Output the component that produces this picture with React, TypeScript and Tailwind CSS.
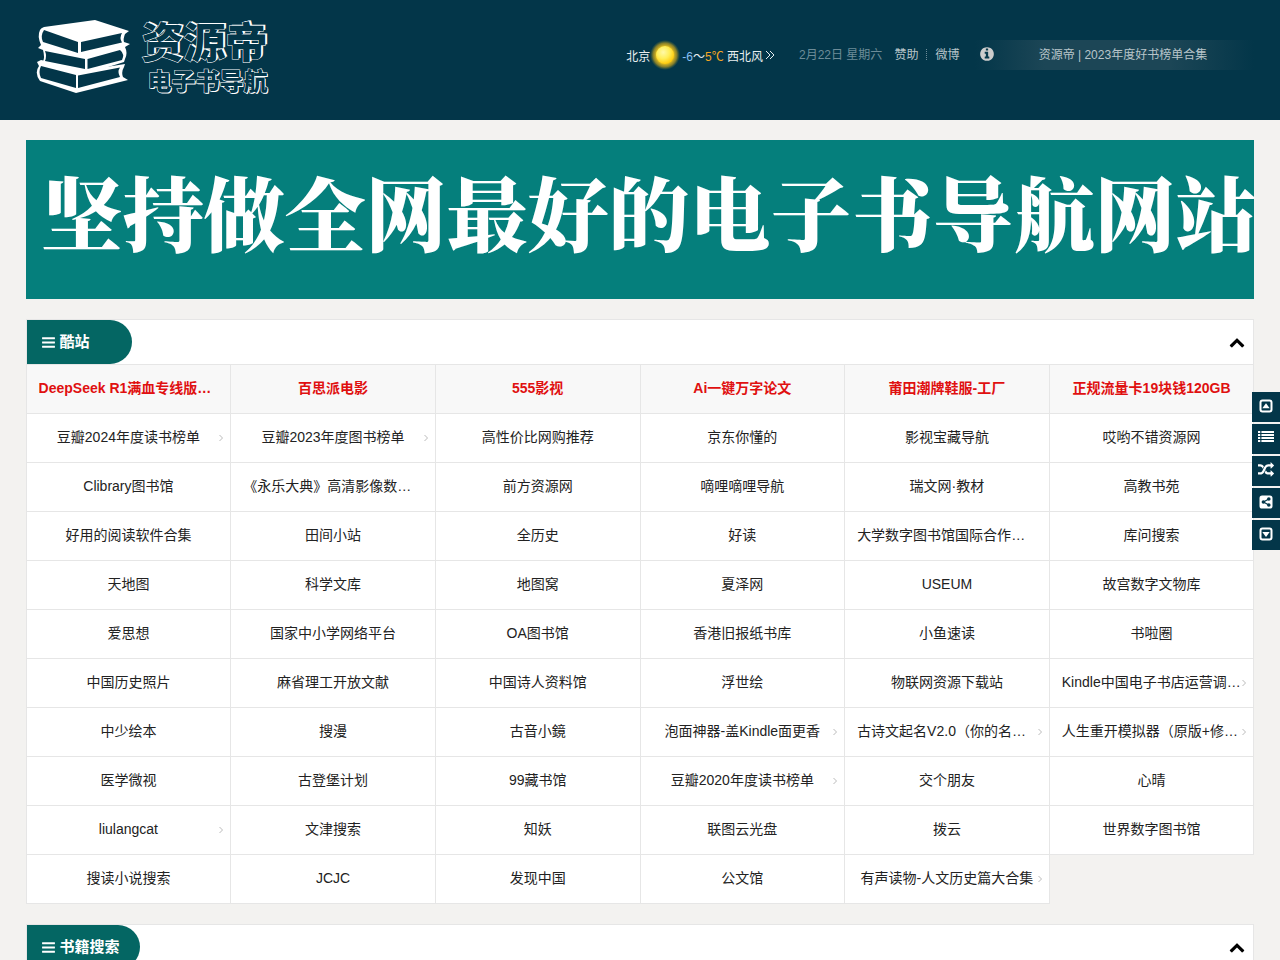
import { useState } from "react";
import type { ReactNode } from "react";

type Site = { name: string; arrow?: boolean; hot?: boolean };

const SITES: Site[] = [
  { name: "DeepSeek R1满血专线版本入口", hot: true },
  { name: "百思派电影", hot: true },
  { name: "555影视", hot: true },
  { name: "Ai一键万字论文", hot: true },
  { name: "莆田潮牌鞋服-工厂", hot: true },
  { name: "正规流量卡19块钱120GB", hot: true },
  { name: "豆瓣2024年度读书榜单", arrow: true },
  { name: "豆瓣2023年度图书榜单", arrow: true },
  { name: "高性价比网购推荐" },
  { name: "京东你懂的" },
  { name: "影视宝藏导航" },
  { name: "哎哟不错资源网" },
  { name: "Clibrary图书馆" },
  { name: "《永乐大典》高清影像数据库" },
  { name: "前方资源网" },
  { name: "嘀哩嘀哩导航" },
  { name: "瑞文网·教材" },
  { name: "高教书苑" },
  { name: "好用的阅读软件合集" },
  { name: "田间小站" },
  { name: "全历史" },
  { name: "好读" },
  { name: "大学数字图书馆国际合作计划" },
  { name: "库问搜索" },
  { name: "天地图" },
  { name: "科学文库" },
  { name: "地图窝" },
  { name: "夏泽网" },
  { name: "USEUM" },
  { name: "故宫数字文物库" },
  { name: "爱思想" },
  { name: "国家中小学网络平台" },
  { name: "OA图书馆" },
  { name: "香港旧报纸书库" },
  { name: "小鱼速读" },
  { name: "书啦圈" },
  { name: "中国历史照片" },
  { name: "麻省理工开放文献" },
  { name: "中国诗人资料馆" },
  { name: "浮世绘" },
  { name: "物联网资源下载站" },
  { name: "Kindle中国电子书店运营调整通知", arrow: true },
  { name: "中少绘本" },
  { name: "搜漫" },
  { name: "古音小鏡" },
  { name: "泡面神器-盖Kindle面更香", arrow: true },
  { name: "古诗文起名V2.0（你的名字）", arrow: true },
  { name: "人生重开模拟器（原版+修改版）", arrow: true },
  { name: "医学微视" },
  { name: "古登堡计划" },
  { name: "99藏书馆" },
  { name: "豆瓣2020年度读书榜单", arrow: true },
  { name: "交个朋友" },
  { name: "心晴" },
  { name: "liulangcat", arrow: true },
  { name: "文津搜索" },
  { name: "知妖" },
  { name: "联图云光盘" },
  { name: "拨云" },
  { name: "世界数字图书馆" },
  { name: "搜读小说搜索" },
  { name: "JCJC" },
  { name: "发现中国" },
  { name: "公文馆" },
  { name: "有声读物-人文历史篇大合集", arrow: true },
];

const PATHS = {
  bars: "M1664 1344v128q0 26-19 45t-45 19h-1408q-26 0-45-19t-19-45v-128q0-26 19-45t45-19h1408q26 0 45 19t19 45zm0-512v128q0 26-19 45t-45 19h-1408q-26 0-45-19t-19-45v-128q0-26 19-45t45-19h1408q26 0 45 19t19 45zm0-512v128q0 26-19 45t-45 19h-1408q-26 0-45-19t-19-45v-128q0-26 19-45t45-19h1408q26 0 45 19t19 45z",
  info: "M1152 1376v-160q0-14-9-23t-23-9h-96v-512q0-14-9-23t-23-9h-320q-14 0-23 9t-9 23v160q0 14 9 23t23 9h96v320h-96q-14 0-23 9t-9 23v160q0 14 9 23t23 9h448q14 0 23-9t9-23zm-128-896v-160q0-14-9-23t-23-9h-192q-14 0-23 9t-9 23v160q0 14 9 23t23 9h192q14 0 23-9t9-23zm640 416q0 209-103 385.5t-279.5 279.5-385.5 103-385.5-103-279.5-279.5-103-385.5 103-385.5 279.5-279.5 385.5-103 385.5 103 279.5 279.5 103 385.5z",
  up: "M1683 1331l-166 165q-19 19-45 19t-45-19l-531-531-531 531q-19 19-45 19t-45-19l-166-165q-19-19-19-45.5t19-45.5l742-741q19-19 45-19t45 19l742 741q19 19 19 45.5t-19 45.5z",
  random:
    "M666 481q-60 92-137 273-22-45-37-72.5t-40.5-63.5-51-56.5-63-35-81.5-14.5h-224q-14 0-23-9t-9-23v-192q0-14 9-23t23-9h224q250 0 410 225zm1126 799q0 14-9 23l-320 320q-9 9-23 9-13 0-22.5-9.5t-9.5-22.5v-192q-32 0-85 .5t-81 1-73-1-71-5-64-10.5-63-18.5-58-28.5-59-40-55-53.5-56-69.5q59-93 136-273 22 45 37 72.5t40.5 63.5 51 56.5 63 35 81.5 14.5h256v-192q0-14 9-23t23-9q12 0 24 10l319 319q9 9 9 23zm0-896q0 14-9 23l-320 320q-9 9-23 9-13 0-22.5-9.5t-9.5-22.5v-192h-256q-48 0-87 15t-69 45-51 61.5-45 77.5q-32 62-78 171-29 66-49.5 111t-54 105-64 100-74 83-90 68.5-106.5 42-128 16.5h-224q-14 0-23-9t-9-23v-192q0-14 9-23t23-9h224q48 0 87-15t69-45 51-61.5 45-77.5q32-62 78-171 29-66 49.5-111t54-105 64-100 74-83 90-68.5 106.5-42 128-16.5h256v-192q0-14 9-23t23-9q12 0 24 10l319 319q9 9 9 23z",
};

function Icon({ d, className }: { d: string; className: string }) {
  return (
    <svg viewBox="0 0 1792 1792" className={className} fill="currentColor" aria-hidden="true">
      <path d={d} />
    </svg>
  );
}

function SquareCaret({ down }: { down?: boolean }) {
  return (
    <svg viewBox="0 0 16 16" className="size-4" aria-hidden="true">
      <rect x="2.5" y="2.5" width="11" height="11" rx="2" fill="none" stroke="currentColor" strokeWidth="2" />
      <path d={down ? "M4.3 6h7.4L8 11z" : "M4.3 10.3h7.4L8 5.3z"} fill="currentColor" />
    </svg>
  );
}

function ListIcon() {
  return (
    <svg viewBox="0 0 16 14" className="h-3.5 w-4" fill="currentColor" aria-hidden="true">
      {[0, 3, 6, 9].map((y) => (
        <g key={y}>
          <rect x="0" y={y} width="2.3" height="2.1" rx="0.3" />
          <rect x="3.4" y={y} width="12.6" height="2.1" rx="0.3" />
        </g>
      ))}
    </svg>
  );
}

function ShareIcon() {
  return (
    <svg viewBox="0 0 16 16" className="size-4" aria-hidden="true">
      <rect x="1.5" y="1.5" width="13" height="13" rx="2.6" fill="currentColor" />
      <g className="fill-[#033649]">
        <path d="M10.7 5L5.5 8l5.2 3" className="fill-none stroke-[#033649]" strokeWidth="1.1" />
        <circle cx="10.8" cy="5" r="1.8" />
        <circle cx="5.4" cy="8" r="1.8" />
        <circle cx="10.8" cy="11" r="1.8" />
      </g>
    </svg>
  );
}

function Books() {
  return (
    <svg viewBox="0 0 94 76" className="h-[76px] w-[94px]" aria-hidden="true">
      <g fill="#fff">
        <path d="M8 8L59 1l34 11-4 3q-2 5-1 8l6 2-5 3q3 6 0 12l-1 3-38 12L7 43Q9 38 7 31l-5-2 3-3Q1 17 4 11q1-2 4-3z" />
        <path d="M5 41l46 10 38-6-1 3q-3 5-1 10l5 3-52 13L4 62Q-2 54 3 47l-2-4z" />
      </g>
      <g className="fill-[#033649]">
        <path d="M8 11l34 12v11L7 23q-3-6 1-12z" />
        <path d="M45 23l41-9q-3 5 0 9.500L45 33z" />
        <path d="M9 32l40 8v10L9 42q2-5 0-10z" />
        <path d="M51.500 40L84 31q5 4 2 10l-34.500 9z" />
        <path d="M5 47l35 9v13L5 59q-3-6 0-12z" />
        <path d="M42 56.500l42-8q-3 4 0 9.500l-42 11z" />
      </g>
    </svg>
  );
}

function Sun() {
  return (
    <svg viewBox="0 0 30 30" className="size-[30px]" aria-hidden="true">
      <defs>
        <radialGradient id="glow">
          <stop offset="0.6" stopColor="#d8b620" />
          <stop offset="0.8" stopColor="#b99b20" stopOpacity="0.7" />
          <stop offset="1" stopColor="#6b7a30" stopOpacity="0" />
        </radialGradient>
        <radialGradient id="disc" cx="0.4" cy="0.35" r="0.7">
          <stop offset="0" stopColor="#fff9a8" />
          <stop offset="0.5" stopColor="#ffee58" />
          <stop offset="1" stopColor="#ffc400" />
        </radialGradient>
      </defs>
      <circle cx="15" cy="15" r="15" fill="url(#glow)" />
      <circle cx="15" cy="15" r="9" fill="url(#disc)" />
    </svg>
  );
}

function Header() {
  return (
    <header className="flex h-[120px] items-start justify-between bg-[#033649] px-[2%]">
      <a href="#" className="flex gap-3 pt-[19px] pl-2.5">
        <Books />
        <div className="flex flex-col items-end font-black whitespace-nowrap text-[#033649] [-webkit-text-stroke:1px_#fff] [paint-order:stroke_fill]">
          <span className="text-[42px] leading-[50px] [text-shadow:2px_-1px_0_#fff]">资源帝</span>
          <span className="text-[24px] leading-[26px] [text-shadow:1px_1px_0_#fff]">电子书导航</span>
        </div>
      </a>

      <div className="flex pt-10 text-xs leading-[30px] whitespace-nowrap text-[#b8c5ca]">
        <a href="#" className="mr-6 flex h-[30px] items-center text-[#e8eef0]">
          <span className="pt-1">北京</span>
          <Sun />
          <span className="mx-[2px] pt-1">
            <span className="text-[#8ac0f5]">-6</span>～<span className="text-[#f5a623]">5℃</span> 西北风
          </span>
          <svg viewBox="0 0 10 10" className="size-2.5" fill="none" stroke="currentColor" aria-hidden="true">
            <path d="M1 1l4 4-4 4M5 1l4 4-4 4" />
          </svg>
        </a>
        <span className="mr-3 text-[#6d8c98]">2月22日 星期六</span>
        <a href="#">赞助</a>
        <span className="mx-2 my-[9px] h-[11px] w-px border-l border-dotted border-[#6d8c98]" />
        <a href="#">微博</a>
        <div className="ml-4 flex h-[30px] w-[279px] items-start bg-[linear-gradient(90deg,transparent,#1c4656_25%,#1c4656_70%,transparent)] pr-1 pl-1">
          <Icon d={PATHS.info} className="mt-1.5 size-4 text-[#ccc]" />
          <a href="#" className="flex-1 text-center">
            资源帝 | 2023年度好书榜单合集
          </a>
        </div>
      </div>
    </header>
  );
}

function Panel({ title, children }: { title: string; children?: ReactNode }) {
  const [open, setOpen] = useState(true);

  return (
    <section className="mt-5">
      <div className="flex h-[46px] items-center justify-between border border-[#e6e6e6] bg-white">
        <h2 className="flex h-11 min-w-[105px] items-center gap-1 rounded-r-full bg-[#046663] pr-5 pl-3.5 text-[15px] font-bold text-white">
          <Icon d={PATHS.bars} className="size-[15px]" />
          {title}
        </h2>
        <button type="button" aria-label={title} aria-expanded={open} onClick={() => setOpen(!open)} className="p-2">
          <Icon d={PATHS.up} className={open ? "size-4 text-black" : "size-4 rotate-180 text-black"} />
        </button>
      </div>
      {open && children}
    </section>
  );
}

function SiteGrid({ sites }: { sites: Site[] }) {
  return (
    <ul className="grid grid-cols-6 border-l border-[#e6e6e6]">
      {sites.map((site) => (
        <li
          key={site.name}
          className={
            "relative h-[49px] border-r border-b border-[#e6e6e6] px-3 text-center text-sm leading-[46px] " +
            (site.hot ? "bg-[#f8f8f8] font-bold text-[#e01010]" : "bg-white text-[#222]")
          }
        >
          <a href="#" className="block truncate">
            {site.name}
          </a>
          {site.arrow && (
            <svg
              viewBox="0 0 6 8"
              className="absolute top-5 right-1.5 h-2 w-1.5"
              fill="none"
              stroke="#bbb"
              aria-hidden="true"
            >
              <path d="M1.5 1l3 3-3 3" />
            </svg>
          )}
        </li>
      ))}
    </ul>
  );
}

const TOOLS = [
  { label: "返回顶部", icon: <SquareCaret /> },
  { label: "目录", icon: <ListIcon /> },
  { label: "随机", icon: <Icon d={PATHS.random} className="size-4" /> },
  { label: "分享", icon: <ShareIcon /> },
  { label: "到底部", icon: <SquareCaret down /> },
];

function SideTools() {
  return (
    <nav className="fixed top-[392px] right-0 flex flex-col gap-0.5">
      {TOOLS.map((tool) => (
        <button
          key={tool.label}
          type="button"
          aria-label={tool.label}
          className="flex h-[30px] w-7 items-center justify-center bg-[#033649] pb-0.5 text-white"
        >
          {tool.icon}
        </button>
      ))}
    </nav>
  );
}

export default function App() {
  return (
    <div className="min-h-screen overflow-x-hidden bg-[#f3f2f0] font-['Liberation_Sans','Noto_Sans_CJK_SC',sans-serif]">
      <Header />
      <main className="px-[2%]">
        {/* Banner */}
        <a
          href="#"
          className="mt-5 flex h-[159px] items-center bg-[#057f7c] pb-[18px] pl-4 font-['Noto_Serif_CJK_SC','Noto_Sans_CJK_SC',serif] text-[81px] leading-none font-black whitespace-nowrap text-white"
        >
          坚持做全网最好的电子书导航网站
        </a>

        <Panel title="酷站">
          <SiteGrid sites={SITES} />
        </Panel>
        <Panel title="书籍搜索" />
      </main>
      <SideTools />
    </div>
  );
}
